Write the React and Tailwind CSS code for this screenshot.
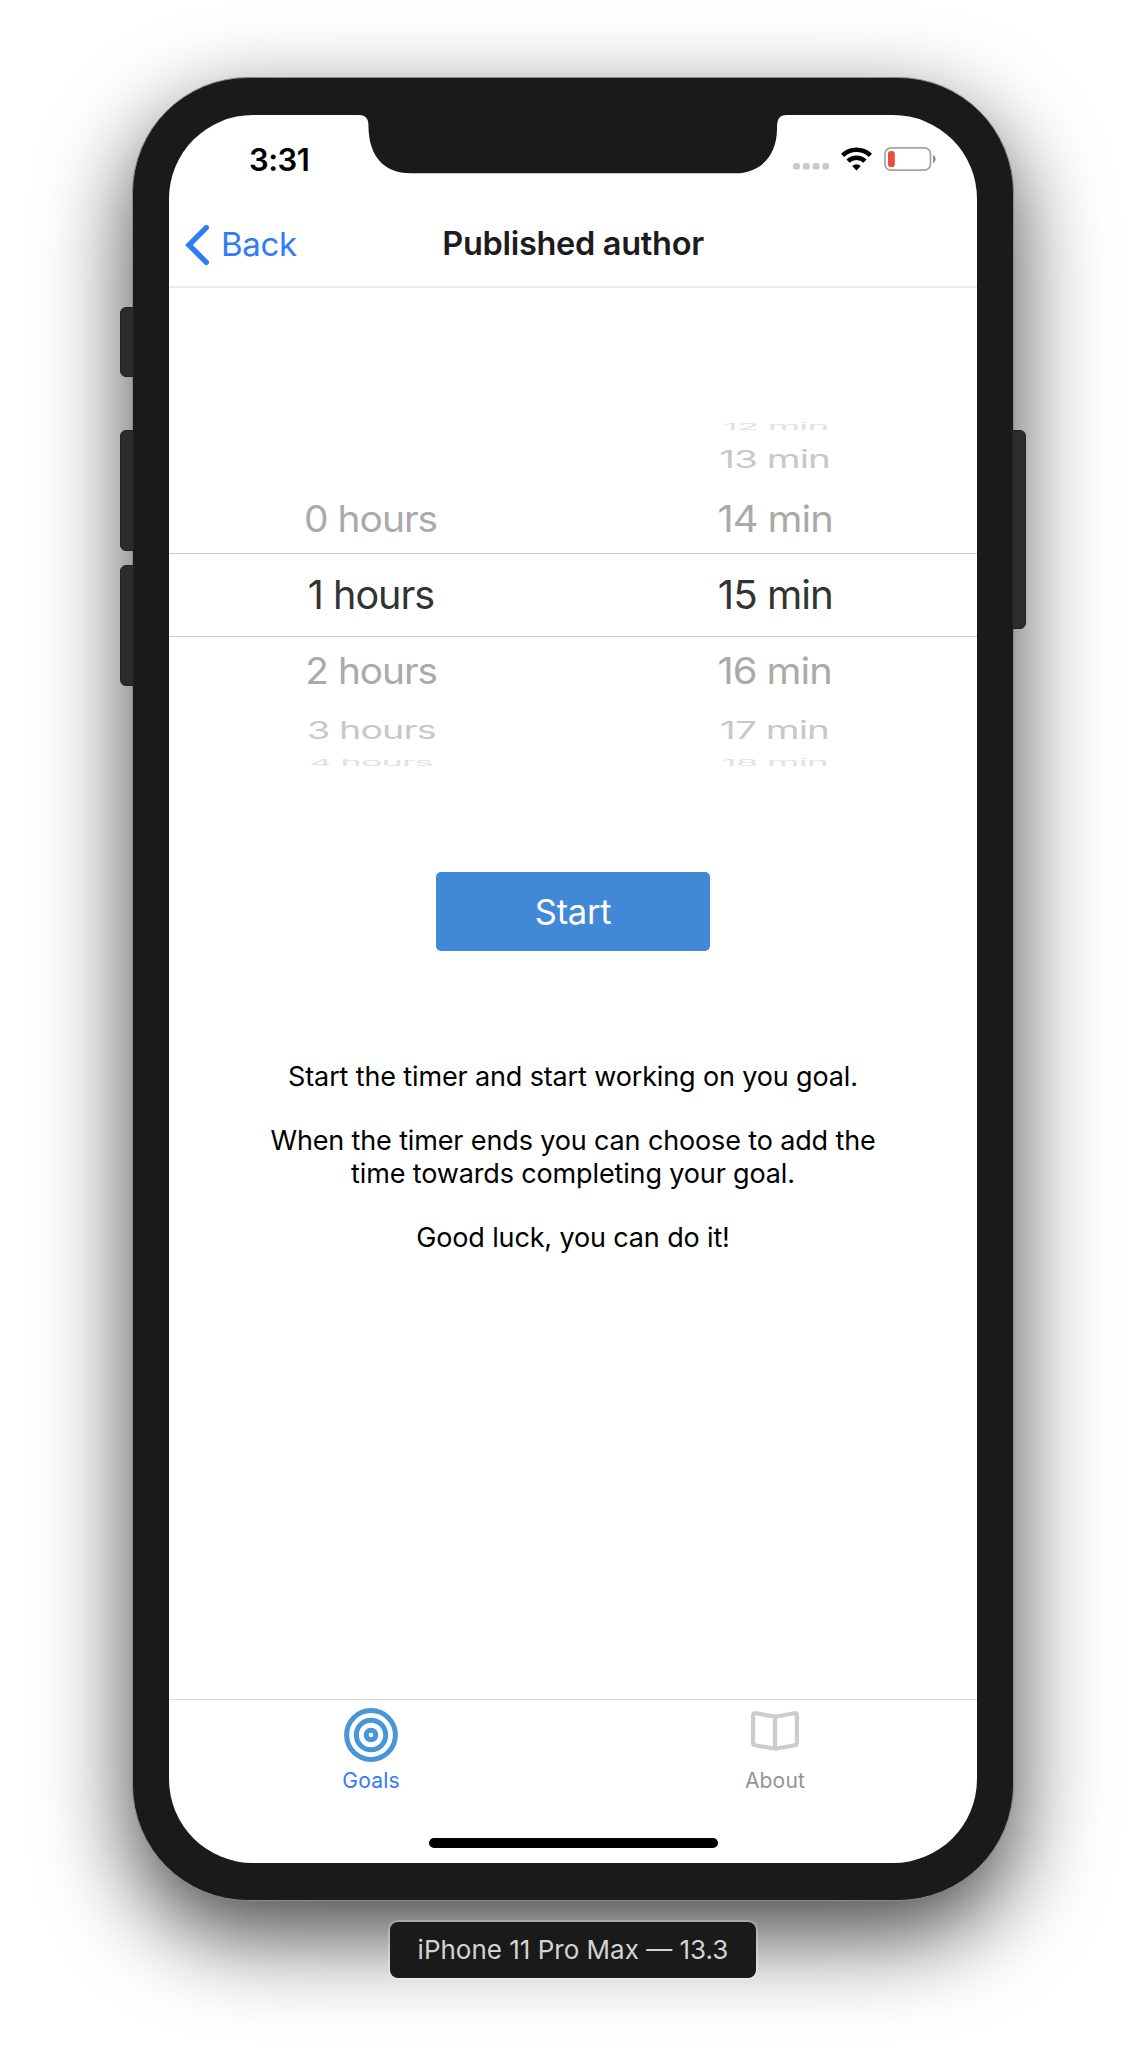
import React from "react";

const rows = [
  { hours: "", min: "12 min", row: "h-[18px] text-[#e2e2e2]", hoursScale: "", minScale: "scale-x-[0.94] scale-y-[0.24]" },
  { hours: "", min: "13 min", row: "h-[47px] text-[#c8c8c8]", hoursScale: "", minScale: "scale-x-[0.98] scale-y-[0.61]" },
  { hours: "0 hours", min: "14 min", row: "h-[70px] pt-[3px] text-[#aaaaaa]", hoursScale: "scale-x-[0.985] scale-y-[0.92]", minScale: "scale-x-[1.01] scale-y-[0.92]" },
  { hours: "1 hours", min: "15 min", row: "h-[84px] border-y border-[#c9c9c9] pt-[1px] text-[#333333]", hoursScale: "", minScale: "scale-x-[1.02]" },
  { hours: "2 hours", min: "16 min", row: "h-[70px] text-[#aaaaaa]", hoursScale: "scale-x-[0.98] scale-y-[0.92]", minScale: "scale-x-[1.01] scale-y-[0.92]" },
  { hours: "3 hours", min: "17 min", row: "h-[47px] text-[#c8c8c8]", hoursScale: "scale-x-[0.955] scale-y-[0.61]", minScale: "scale-x-[0.98] scale-y-[0.61]" },
  { hours: "4 hours", min: "18 min", row: "h-[18px] text-[#e2e2e2]", hoursScale: "scale-x-[0.91] scale-y-[0.24]", minScale: "scale-x-[0.94] scale-y-[0.24]" },
];

function StatusBar() {
  return (
    <div className="flex h-[88px] items-center pl-[80px] pr-[41px]">
      <span className="text-[31px] font-semibold leading-none tracking-[-0.5px] text-black">3:31</span>
      <svg className="ml-auto mt-[15px]" width="36" height="7" viewBox="0 0 36 7" fill="#c9c9c9">
        <rect x="0" width="7" height="6.6" rx="2.4" />
        <rect x="9.8" width="7" height="6.6" rx="2.4" />
        <rect x="19.6" width="7" height="6.6" rx="2.4" />
        <rect x="29.3" width="6.7" height="6.6" rx="2.4" />
      </svg>
      <svg className="ml-[12px]" width="31" height="24" viewBox="0 0 31 24" fill="none" stroke="#000">
        <path d="M1.6 8.4a20 20 0 0 1 27.8 0" strokeWidth="4.6" />
        <path d="M7 14.2a12.2 12.2 0 0 1 17 0" strokeWidth="4.6" />
        <path d="M11.2 19.1a6.2 6.2 0 0 1 8.6 0L15.5 23.4z" fill="#000" stroke="none" />
      </svg>
      <svg className="ml-[12px]" width="52" height="24" viewBox="0 0 52 24">
        <rect x="0.9" y="0.9" width="45.6" height="22.2" rx="6" fill="none" stroke="#a3a3a3" strokeWidth="1.7" />
        <rect x="4" y="4" width="6.8" height="16" rx="2.8" fill="#eb4d3d" />
        <path d="M49 8c3.6 1.6 3.6 6.400 0 8z" fill="#8d8d8d" />
      </svg>
    </div>
  );
}

function NavBar() {
  return (
    <div className="grid h-[85px] grid-cols-[1fr_auto_1fr] items-center border-b-2 border-[#ededed]">
      <div className="flex items-center pl-[16px] text-[#2f7cf6]">
        <svg width="24" height="40" viewBox="0 0 24 40" fill="none" stroke="currentColor" strokeWidth="5.4" strokeLinecap="round">
          <path d="M21.3 2.700L3.900 20l17.400 17.300" />
        </svg>
        <span className="ml-[12px] text-[33px] leading-none tracking-[-0.3px]">Back</span>
      </div>
      <h1 className="text-[32.5px] font-semibold leading-none tracking-[-0.3px] text-[#1c1c1e]">Published author</h1>
    </div>
  );
}

function Picker() {
  return (
    <div className="mt-[130px]">
      {rows.map((r) => (
        <div key={r.min} className={"flex items-center text-center text-[39.5px] leading-none tracking-[-1px] " + r.row}>
          <div className="w-1/2"><span className={"inline-block whitespace-nowrap " + r.hoursScale}>{r.hours}</span></div>
          <div className="w-1/2"><span className={"inline-block whitespace-nowrap " + r.minScale}>{r.min}</span></div>
        </div>
      ))}
    </div>
  );
}

function TabBar() {
  return (
    <div className="mt-auto flex h-[164px] shrink-0 border-t border-[#dadada] text-[21px] leading-[24px] tracking-[0.2px]">
      <div className="flex w-1/2 flex-col items-center pt-[8px] text-[#2f7cf6]">
        <svg width="54" height="54" viewBox="0 0 54 54" fill="none" stroke="#4a94d8" strokeWidth="5">
          <circle cx="27" cy="27" r="24.400" />
          <circle cx="27" cy="27" r="14.700" />
          <circle cx="27" cy="27" r="4.800" />
        </svg>
        <span className="mt-[7px]">Goals</span>
      </div>
      <div className="flex w-1/2 flex-col items-center pt-[11px] text-[#949494]">
        <svg width="48" height="40" viewBox="0 0 48 40" fill="none" stroke="#cccccc" strokeWidth="4.200" strokeLinejoin="round">
          <path d="M24 5.800L4.600 2.200C3 1.900 2.100 2.700 2.100 4.200v27.900c0 1.200.6 1.900 1.800 2.100L24 37.800l20.100-3.600c1.200-.2 1.800-.9 1.800-2.100V4.200c0-1.500-.9-2.300-2.500-2z" />
          <path d="M24 5.800v32" />
        </svg>
        <span className="mt-[18px]">About</span>
      </div>
    </div>
  );
}

export default function App() {
  return (
    <div className="flex h-[2050px] w-[1146px] flex-col items-center overflow-hidden bg-white pt-[77px] font-['Inter',sans-serif]">
      <div className="relative h-[1824px] w-[882px] shrink-0 rounded-[116px] border border-[#8a8a8a] bg-[#1a1a1a] px-[36px] pt-[37px] shadow-[0_34px_90px_rgba(0,0,0,0.73)]">
        <div className="absolute left-[-13px] top-[229px] h-[70px] w-[14px] rounded-l-[6px] border border-[#222] bg-[#2c2c2c]" />
        <div className="absolute left-[-13px] top-[352px] h-[121px] w-[14px] rounded-l-[6px] border border-[#222] bg-[#2c2c2c]" />
        <div className="absolute left-[-13px] top-[487px] h-[121px] w-[14px] rounded-l-[6px] border border-[#222] bg-[#2c2c2c]" />
        <div className="absolute right-[-13px] top-[352px] h-[199px] w-[14px] rounded-r-[6px] border border-[#222] bg-[#2c2c2c]" />

        <div className="relative flex h-[1748px] w-[808px] flex-col overflow-hidden rounded-[84px] bg-white">
          <svg className="absolute left-[190px] top-0" width="428" height="59" viewBox="0 0 428 59" fill="#1a1a1a">
            <path d="M0 0C7 0 9.500 4 9.500 11C9.500 40 24 58.300 52 58.300H376C402 58.300 418 40 418 14C418 4 420 0 428 0Z" />
          </svg>
          <StatusBar />
          <NavBar />
          <Picker />
          <button className="mt-[100px] h-[79px] w-[274px] shrink-0 self-center rounded-[5px] bg-[#4189d6] text-[34.5px] leading-none tracking-[-0.3px] text-white">
            <span className="relative top-[1px]">Start</span>
          </button>
          <div className="mt-[109px] flex flex-col gap-[31px] text-center text-[27px] leading-[33px] tracking-[-0.14px] text-black">
            <p>Start the timer and start working on you goal.</p>
            <p>When the timer ends you can choose to add the<br />time towards completing your goal.</p>
            <p>Good luck, you can do it!</p>
          </div>
          <TabBar />
          <div className="absolute bottom-[15px] left-[260px] h-[10px] w-[289px] rounded-full bg-black" />
        </div>
      </div>
      <div className="relative mt-[21px] flex h-[56px] w-[366px] shrink-0 items-center justify-center rounded-[8px] bg-[#1a1a1a] text-[26px] leading-none text-[#d4d4d4] shadow-[0_0_0_2px_rgba(255,255,255,0.25)]">
        iPhone 11 Pro Max — 13.3
      </div>
    </div>
  );
}
